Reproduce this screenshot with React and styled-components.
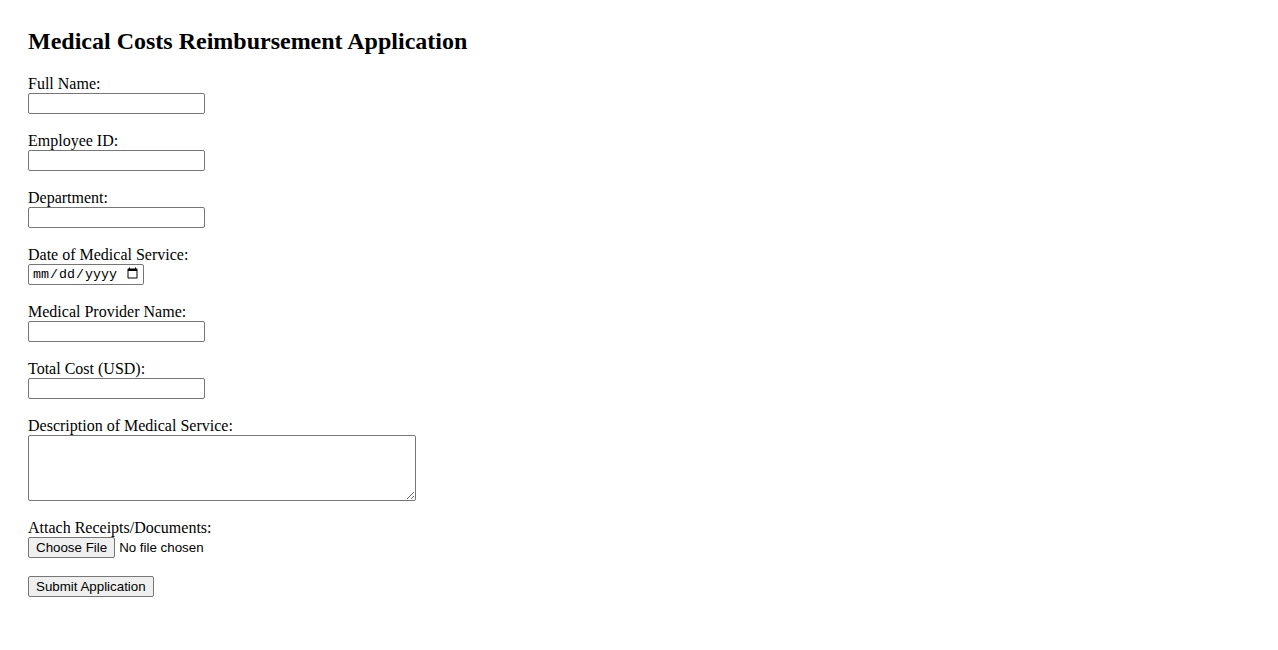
import React from 'react';
import styled, { createGlobalStyle } from 'styled-components';

const GlobalStyle = createGlobalStyle`
  body {
    margin: 0;
    background: #ffffff;
    color: #000000;
    font-family: "Liberation Serif", "Times New Roman", serif;
  }
`;

const Page = styled.div`
  padding: 28px 28px 40px;
`;

const Title = styled.h2`
  margin: 0 0 19px;
  font-size: 24px;
  font-weight: bold;
  line-height: 27.6px;
`;

const Form = styled.form`
  display: flex;
  flex-direction: column;
  align-items: flex-start;
`;

const Field = styled.div`
  display: flex;
  flex-direction: column;
  align-items: flex-start;
  margin-bottom: ${props => props.gap || 18}px;
`;

const Label = styled.label`
  display: block;
  font-size: 16px;
  line-height: 18px;
  height: 18px;
`;

const control = `
  box-sizing: border-box;
  margin: 0;
  border: 1px solid #767676;
  border-radius: 2px;
  background: #ffffff;
  color: #000000;
`;

const TextInput = styled.input`
  ${control}
  width: ${props => props.width || 177}px;
  height: 21px;
  padding: 1px 2px;
  font: 13.33px "Liberation Sans", Arial, sans-serif;
`;

const DateInput = styled.input`
  ${control}
  width: 116px;
  height: 21px;
  padding: 1px 2px 1px 3px;
  font: 13.33px "Liberation Mono", "Courier New", monospace;
`;

const TextArea = styled.textarea`
  ${control}
  display: block;
  width: 388px;
  height: 66px;
  padding: 2px;
  font: 13.33px "Liberation Mono", monospace;
`;

const FileInput = styled.input`
  margin: 0;
  height: 21px;
  font: 13.33px "Liberation Sans", Arial, sans-serif;
  color: #000000;

  &::file-selector-button {
    box-sizing: border-box;
    height: 21px;
    margin: 0 4px 0 0;
    padding: 1px 7px;
    border: 1px solid #767676;
    border-radius: 2px;
    background: #efefef;
    color: #000000;
    font: 13.33px "Liberation Sans", Arial, sans-serif;
  }
`;

const Button = styled.button`
  box-sizing: border-box;
  height: 21px;
  margin: 0;
  padding: 1px 7px;
  border: 1px solid #767676;
  border-radius: 2px;
  background: #efefef;
  color: #000000;
  font: 13.33px "Liberation Sans", Arial, sans-serif;
`;

const fields = [
  { id: 'fullName', label: 'Full Name:' },
  { id: 'employeeId', label: 'Employee ID:' },
  { id: 'department', label: 'Department:' },
  { id: 'serviceDate', label: 'Date of Medical Service:', type: 'date' },
  { id: 'provider', label: 'Medical Provider Name:' },
  { id: 'totalCost', label: 'Total Cost (USD):' }
];

const App = () => (
  <Page>
    <GlobalStyle />
    <Title>Medical Costs Reimbursement Application</Title>
    <Form onSubmit={e => e.preventDefault()}>
      {fields.map(field => (
        <Field key={field.id}>
          <Label htmlFor={field.id}>{field.label}</Label>
          {field.type === 'date' ? (
            <DateInput type="date" id={field.id} name={field.id} />
          ) : (
            <TextInput type="text" id={field.id} name={field.id} />
          )}
        </Field>
      ))}
      <Field>
        <Label htmlFor="description">Description of Medical Service:</Label>
        <TextArea id="description" name="description" />
      </Field>
      <Field>
        <Label htmlFor="receipts">Attach Receipts/Documents:</Label>
        <FileInput type="file" id="receipts" name="receipts" />
      </Field>
      <Button type="submit">Submit Application</Button>
    </Form>
  </Page>
);

export default App;
